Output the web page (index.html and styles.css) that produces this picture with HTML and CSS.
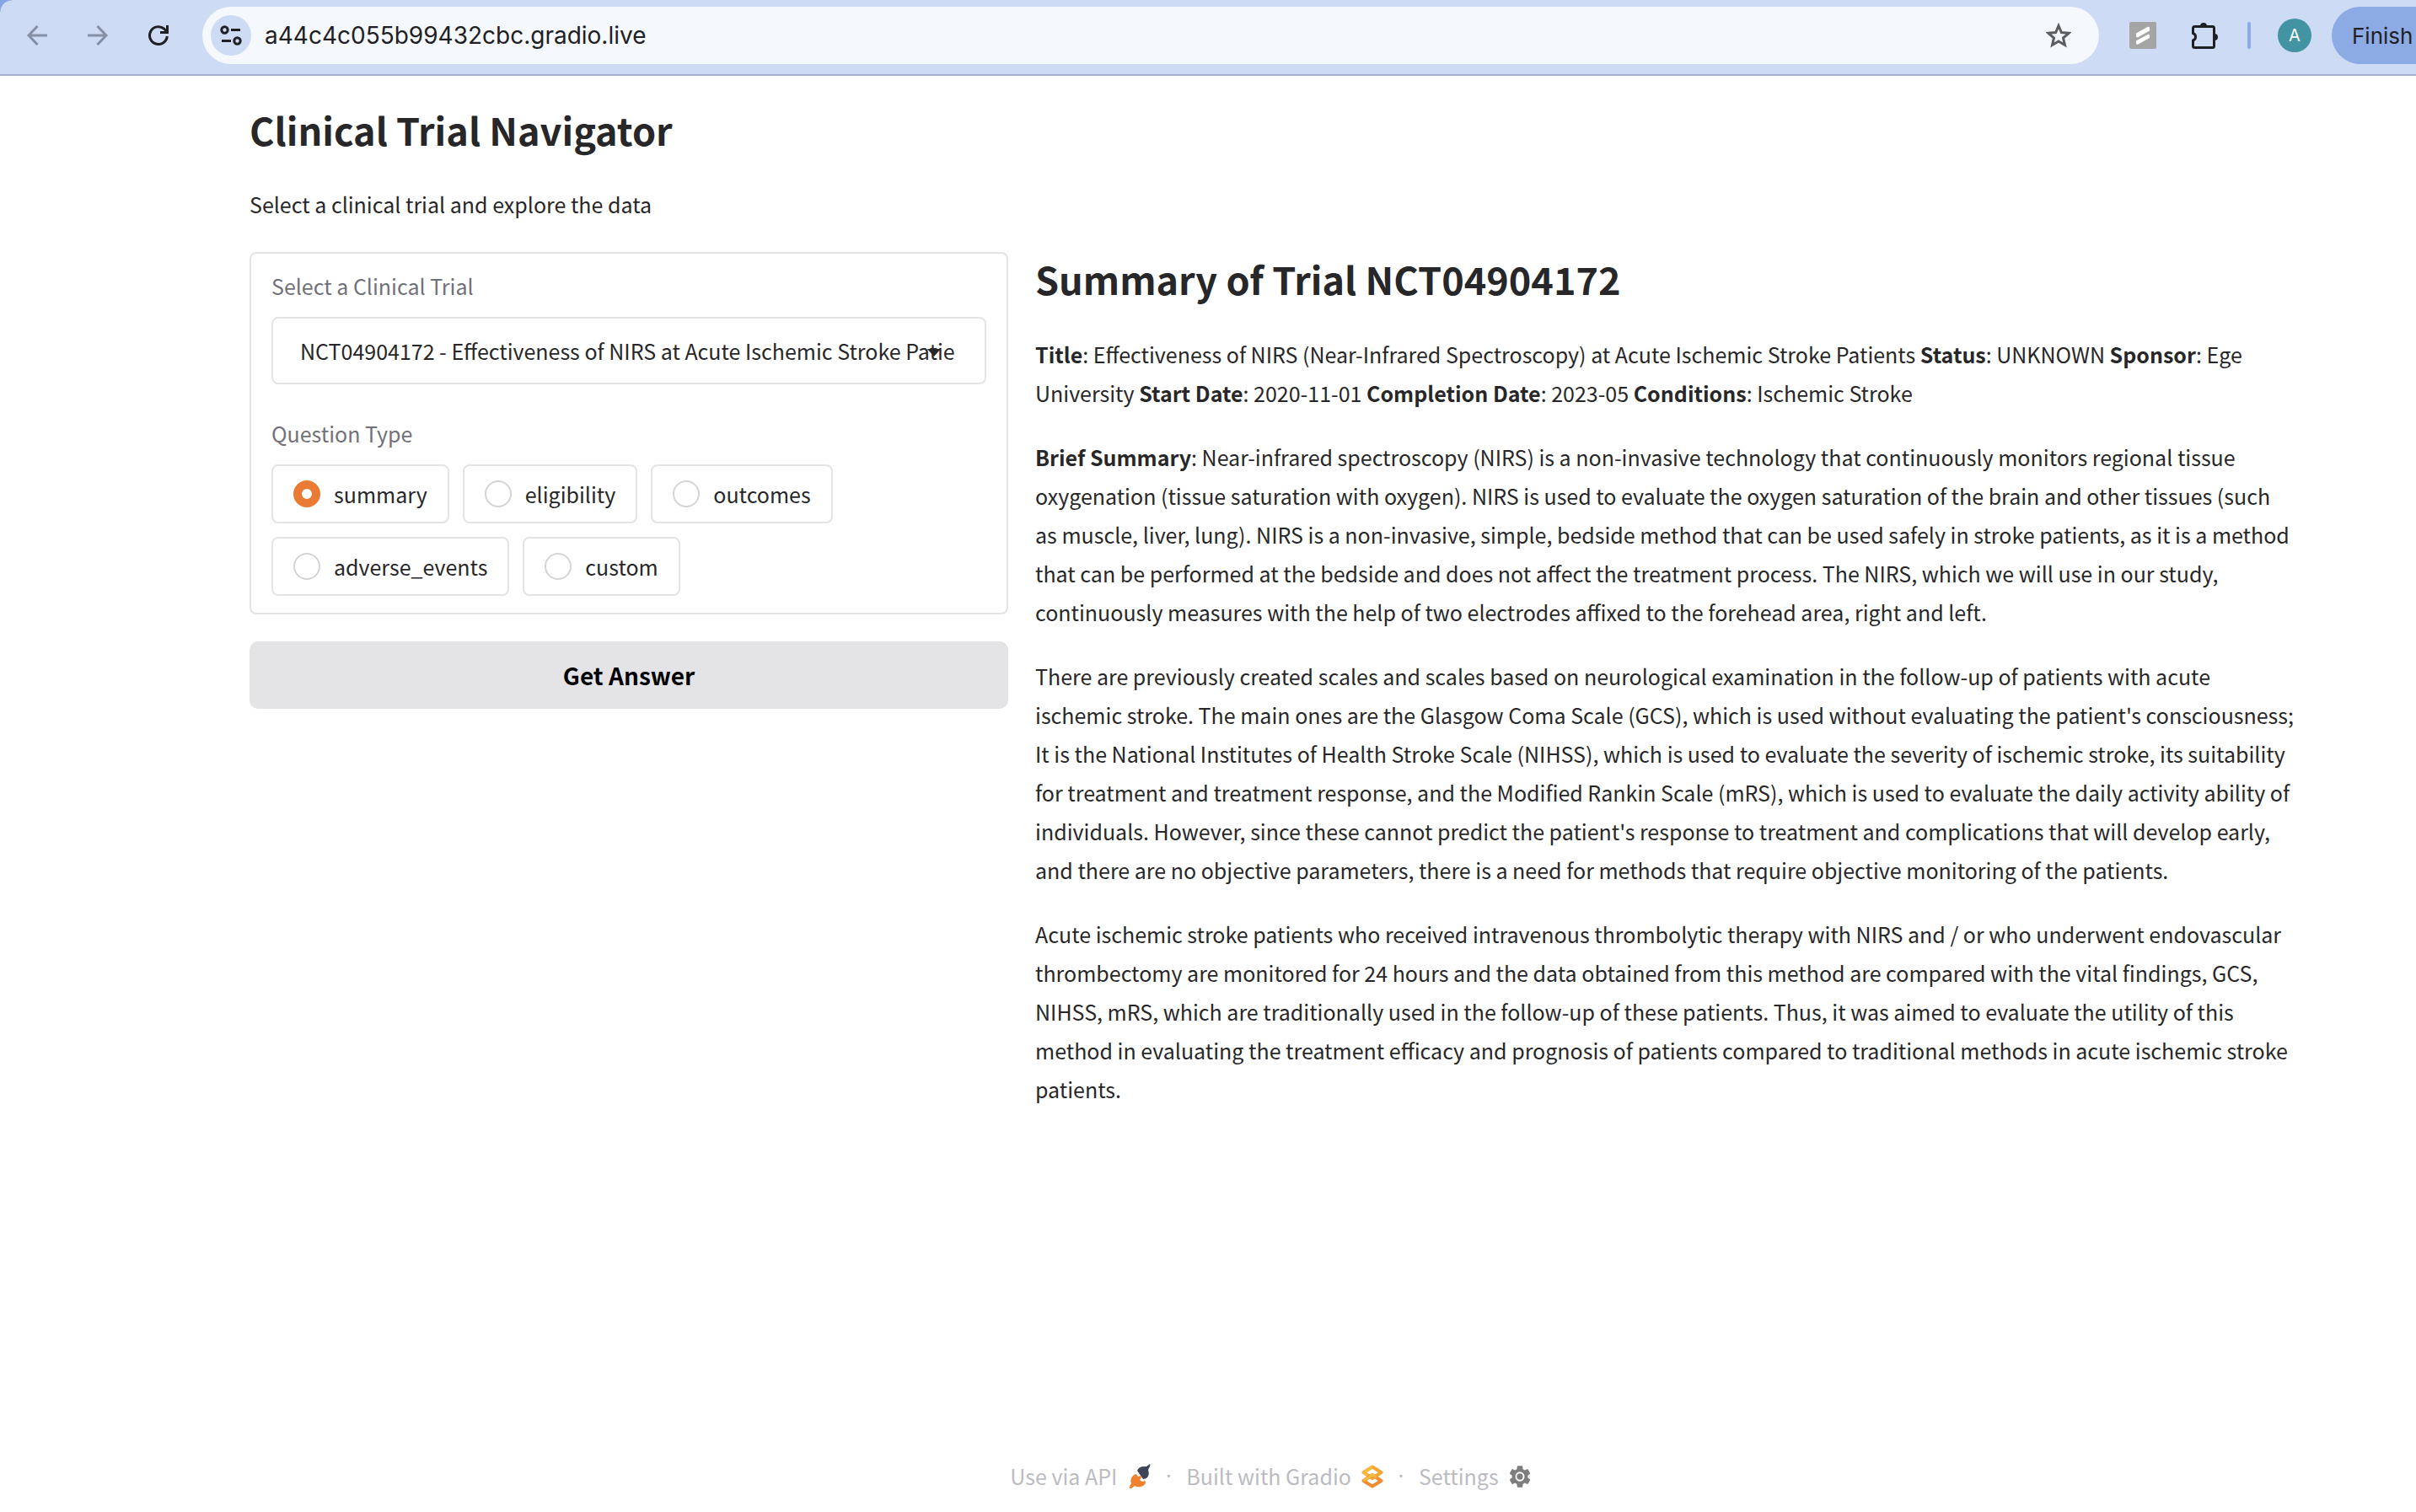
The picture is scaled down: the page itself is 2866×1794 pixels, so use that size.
FILE: index.html
```html
<!DOCTYPE html>
<html lang="en">
<head>
<meta charset="utf-8">
<title>Clinical Trial Navigator</title>
<link rel="stylesheet" href="styles.css">
</head>
<body>
<header class="toolbar">
  <nav class="nav">
    <button class="icon-btn dim" aria-label="Back"><svg width="24" height="24" viewBox="0 0 24 24"><path d="M24 12H2M12.500 1 2 12l10.500 11" fill="none" stroke="currentColor" stroke-width="3"/></svg></button>
    <button class="icon-btn dim" aria-label="Forward"><svg width="24" height="24" viewBox="0 0 24 24"><path d="M0 12h22M11.500 1 22 12 11.500 23" fill="none" stroke="currentColor" stroke-width="3"/></svg></button>
    <button class="icon-btn" aria-label="Reload"><svg width="24" height="24" viewBox="0 0 24 24"><path d="M22.300 13A10.400 10.400 0 1 1 18.500 4L22 7.500" fill="none" stroke="currentColor" stroke-width="3"/><path d="M24 0v10H14V7h7V0z" fill="currentColor"/></svg></button>
  </nav>
  <div class="omnibox">
    <button class="site-info" aria-label="Site information"><svg width="26" height="24" viewBox="0 0 26 24"><g fill="none" stroke="currentColor" stroke-width="3"><circle cx="5.500" cy="5.500" r="3.700"/><path d="M13 5.500h11M2 18.500h11"/><circle cx="20.500" cy="18.500" r="3.700"/></g></svg></button>
    <input class="url" type="text" aria-label="Address" value="a44c4c055b99432cbc.gradio.live">
    <button class="icon-btn star" aria-label="Bookmark"><svg width="30" height="30" viewBox="0 0 30 30"><path d="m15 3.500 3.400 8 8.700.8-6.600 5.700 2 8.500-7.500-4.500-7.500 4.500 2-8.500-6.600-5.700 8.700-.8z" fill="none" stroke="currentColor" stroke-width="3"/></svg></button>
  </div>
  <div class="tools">
    <button class="icon-btn" aria-label="Extension"><svg width="32" height="32" viewBox="0 0 32 32"><rect width="32" height="32" rx="2" fill="#a5a5a5"/><path d="M8 13.500 21.500 6q2.500-1 2.500 1v3.500L10.500 18Q8 19 8 17zM8 22.500 21.500 15q2.500-1 2.500 1v3L10.500 26.500Q8 27.500 8 25.500z" fill="#fff"/></svg></button>
    <button class="icon-btn" aria-label="Extensions"><svg width="32" height="32" viewBox="0 0 32 32"><path d="M3.500 5.500h21q2 0 2 2v21q0 2-2 2h-21q-2 0-2-2v-6.500a4.500 4.500 0 0 0 0-8.500v-6q0-2 2-2z" fill="none" stroke="currentColor" stroke-width="3"/><path d="M10 5a4 4 0 0 1 8 0zM27 14a4 4 0 0 1 0 8z" fill="currentColor"/></svg></button>
    <span class="divider"></span>
    <button class="avatar" aria-label="Profile">A</button>
    <button class="finish">Finish</button>
  </div>
</header>

<main class="page">
  <section class="intro">
    <h1>Clinical Trial Navigator</h1>
    <p>Select a clinical trial and explore the data</p>
  </section>
  <div class="columns">
    <form class="controls">
      <div class="card">
        <div class="field">
          <label class="caption" for="trial">Select a Clinical Trial</label>
          <div class="dropdown">
            <input id="trial" class="trial" type="text" role="combobox" aria-expanded="false" value="NCT04904172 - Effectiveness of NIRS at Acute Ischemic Stroke Patients">
            <svg class="caret" width="16" height="9" viewBox="0 0 16 9" aria-hidden="true"><path d="M0 0h16L8 9z" fill="#27272a"/></svg>
          </div>
        </div>
        <fieldset class="field">
          <legend class="caption">Question Type</legend>
          <div class="options">
            <label class="option"><input type="radio" name="question" checked><span>summary</span></label>
            <label class="option"><input type="radio" name="question"><span>eligibility</span></label>
            <label class="option"><input type="radio" name="question"><span>outcomes</span></label>
            <label class="option"><input type="radio" name="question"><span>adverse_events</span></label>
            <label class="option"><input type="radio" name="question"><span>custom</span></label>
          </div>
        </fieldset>
      </div>
      <button class="submit" type="button">Get Answer</button>
    </form>
    <article class="answer">
      <h1>Summary of Trial NCT04904172</h1>
      <p><strong>Title</strong>: Effectiveness of NIRS (Near-Infrared Spectroscopy) at Acute Ischemic Stroke Patients <strong>Status</strong>: UNKNOWN <strong>Sponsor</strong>: Ege University <strong>Start Date</strong>: 2020-11-01 <strong>Completion Date</strong>: 2023-05 <strong>Conditions</strong>: Ischemic Stroke</p>
      <p><strong>Brief Summary</strong>: Near-infrared spectroscopy (NIRS) is a non-invasive technology that continuously monitors regional tissue oxygenation (tissue saturation with oxygen). NIRS is used to evaluate the oxygen saturation of the brain and other tissues (such as&nbsp;muscle, liver, lung). NIRS is a non-invasive, simple, bedside method that can be used safely in stroke patients, as it is a method that can be performed at the bedside and does not affect the treatment process. The NIRS, which we will use in our study, continuously measures with the help of two electrodes affixed to the forehead area, right and left.</p>
      <p>There are previously created scales and scales based on neurological examination in the follow-up of patients with acute ischemic stroke. The main ones are the Glasgow Coma Scale (GCS), which is used without evaluating the patient's consciousness; It is the National Institutes of Health Stroke Scale (NIHSS), which is used to evaluate the severity of ischemic stroke, its suitability for treatment and treatment response, and the Modified Rankin Scale (mRS), which is used to evaluate the daily activity ability of individuals. However, since these cannot predict the patient's response to treatment and complications that will develop early, and there are no objective parameters, there is a need for methods that require objective monitoring of the patients.</p>
      <p>Acute ischemic stroke patients who received intravenous thrombolytic therapy with NIRS and / or who underwent endovascular thrombectomy are monitored for 24 hours and the data obtained from this method are compared with the vital findings, GCS, NIHSS, mRS, which are traditionally used in the follow-up of these patients. Thus, it was aimed to evaluate the utility of this method in evaluating the treatment efficacy and prognosis of patients compared to traditional methods in acute ischemic stroke patients.</p>
    </article>
  </div>
</main>

<footer class="footer">
  <a href="#api">Use via API <svg width="28" height="30" viewBox="-3 0 28 30"><path d="M24 0q1 1 0 3l-2 4q2 5-1 9-2 2-5 2L9 8q2-5 8-5l3 0z" fill="#3e4657"/><path d="M0 29q-1-1 1-4l1-2q-2-5 2-9 2-2 4-2l2 3 3-1 1 2-2 3 3 2 3-1 1 2q-1 4-6 5-4 1-7-1l-4 3z" fill="#f0812d"/></svg></a>
  <span class="dot">·</span>
  <a href="#gradio">Built with Gradio <svg width="26" height="28" viewBox="0 0 26 28"><g fill="none" stroke-width="4" stroke-linejoin="round"><path d="M13 2.500 2.500 9 13 16l10.500-7z" stroke="#f5a733"/><path d="M13 12 2.500 19 13 25.500 23.500 19z" stroke="#ee8e34"/><path d="M2.500 19 13 12l5 3M13 2.500 2.500 9l5 3.500" stroke="#f6bd3d" stroke-width="3"/></g></svg></a>
  <span class="dot">·</span>
  <a href="#settings">Settings <svg width="26" height="32" viewBox="2 0 20 24" preserveAspectRatio="none"><path d="M19.140 12.940c.04-.3.060-.61.060-.94 0-.32-.020-.64-.070-.94l2.030-1.580a.49.49 0 0 0 .12-.61l-1.920-3.320a.49.49 0 0 0-.59-.22l-2.390.96a7 7 0 0 0-1.620-.94l-.36-2.540a.48.48 0 0 0-.48-.41h-3.840a.47.47 0 0 0-.47.410l-.36 2.540c-.59.24-1.130.57-1.620.94l-2.390-.96a.47.47 0 0 0-.59.220L2.740 8.870a.48.48 0 0 0 .12.610l2.030 1.580a6 6 0 0 0-.02 1.880l-2.010 1.580a.49.49 0 0 0-.12.610l1.920 3.320c.12.22.37.29.59.22l2.390-.96c.5.380 1.030.7 1.620.94l.36 2.540c.05.240.24.410.48.410h3.840c.24 0 .44-.17.470-.41l.36-2.540a7 7 0 0 0 1.620-.94l2.390.96c.22.080.47 0 .59-.22l1.920-3.320a.47.470 0 0 0-.12-.61z" fill="#7e7e7e"/><circle cx="12" cy="12" r="3.500" fill="#7e7e7e" stroke="#fff" stroke-width="1.500"/></svg></a>
</footer>
</body>
</html>
```
FILE: styles.css
```css
* { box-sizing: border-box; }

body {
  margin: 0;
  min-height: 100vh;
  display: flex;
  flex-direction: column;
  background: #fff;
  color: #27272a;
  font-family: "Noto Sans CJK SC", sans-serif;
  font-size: 25px;
  line-height: 45px;
  overflow-x: hidden;
}

button, input { font: inherit; color: inherit; }
button { border: 0; padding: 0; background: none; }
svg { display: block; flex: none; }

.toolbar {
  display: flex;
  align-items: center;
  height: 90px;
  padding: 8px 0 12px 32px;
  border-bottom: 2px solid #a5b0cb;
  background: radial-gradient(circle at 100% 100%, #cddbf5 13px, #86a5e2 14px) 0 0 / 14px 14px no-repeat, #cddbf5;
  color: #1f2023;
  font-family: Inter, sans-serif;
}
.nav { display: flex; gap: 48px; width: 208px; }
.icon-btn { display: flex; }
.dim { color: #868fa3; }
.omnibox {
  flex: 1;
  display: flex;
  align-items: center;
  height: 68px;
  padding: 0 33px 0 10px;
  border-radius: 34px;
  background: #f5f8fd;
}
.site-info {
  display: grid;
  place-items: center;
  width: 48px;
  height: 48px;
  border-radius: 50%;
  background: #cddbf5;
}
.url {
  flex: 1;
  border: 0;
  padding: 0 16px;
  background: none;
  font-size: 28px;
}
.star { color: #5c5d60; }
.tools { display: flex; align-items: center; padding-left: 36px; }
.tools .icon-btn { margin-right: 42px; }
.tools .icon-btn + .icon-btn { margin-right: 34px; }
.divider { width: 4px; height: 32px; border-radius: 2px; background: #8cabe5; }
.avatar {
  width: 40px;
  height: 40px;
  margin: 0 24px 0 32px;
  border-radius: 50%;
  background: #4294a3;
  color: #fff;
  font-size: 20px;
  line-height: 40px;
}
.finish {
  width: 100px;
  height: 68px;
  padding-left: 24px;
  border-radius: 34px 0 0 34px;
  background: #8cabe5;
  font-size: 26px;
  text-align: left;
}

.page { flex: 1; padding: 32px 138px 0 296px; }
h1, p { margin: 0; }
h1 { font-size: 45px; line-height: 64px; }
strong { font-weight: 600; }
.intro p { margin-top: 34px; }
.columns {
  display: grid;
  grid-template-columns: 3fr 5fr;
  gap: 32px;
  margin-top: 34px;
}
.controls { display: flex; flex-direction: column; gap: 32px; }
.card {
  display: flex;
  flex-direction: column;
  gap: 38px;
  padding: 18px 24px 20px;
  border: 2px solid #e4e4e7;
  border-radius: 8px;
}
.field { margin: 0; padding: 0; border: 0; min-width: 0; }
.caption { display: block; padding: 0; margin-bottom: 17px; color: #71717a; line-height: 40px; }
.dropdown { position: relative; }
.trial {
  display: block;
  width: 100%;
  height: 80px;
  padding: 0 36px 0 32px;
  border: 2px solid #e4e4e7;
  border-radius: 8px;
  background: #fff;
}
.caret { position: absolute; right: 54px; top: 38px; }
.options { display: flex; flex-wrap: wrap; gap: 16px; }
.option {
  display: flex;
  align-items: center;
  gap: 16px;
  height: 70px;
  padding: 0 24px;
  border: 2px solid #e4e4e7;
  border-radius: 8px;
}
.option input {
  appearance: none;
  width: 32px;
  height: 32px;
  margin: 0;
  border: 2px solid #d4d4d8;
  border-radius: 50%;
  background: #fff;
}
.option input:checked { border: 10px solid #e97b35; }
.submit {
  height: 80px;
  border-radius: 10px;
  background: #e4e4e7;
  color: #000;
  font-size: 28px;
  font-weight: 700;
}

.answer { line-height: 46px; }
.answer p { margin-top: 30px; }
.answer h1 + p { margin-top: 34px; }

.footer {
  display: flex;
  justify-content: center;
  gap: 15px;
  padding: 0 12px 20px 160px;
  color: #bbbbc2;
}
.footer a { display: flex; align-items: center; gap: 12px; color: inherit; text-decoration: none; }
.dot { width: 12px; font-family: Inter, sans-serif; text-align: center; }
```
